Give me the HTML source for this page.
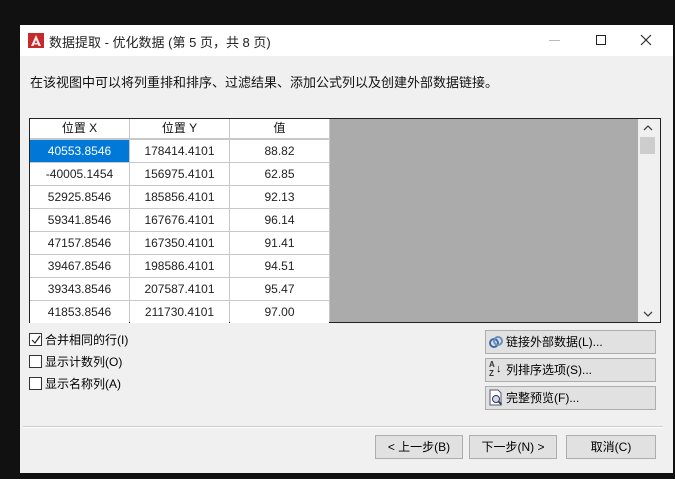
<!DOCTYPE html>
<html><head><meta charset="utf-8"><style>
*{margin:0;padding:0;box-sizing:border-box}
body{width:675px;height:479px;background:#111;position:relative;overflow:hidden;font-family:"Liberation Sans","Noto Sans CJK SC",sans-serif;font-size:12px;color:#000}
.win{position:absolute;left:20px;top:25px;width:653px;height:448px;background:#f0f0f0}
.title{position:absolute;left:0;top:0;width:653px;height:31px;background:#fff}
.abs{position:absolute}
.cell{position:absolute;height:22px;line-height:22px;text-align:center;background:#fff;font-size:12px;color:#222}
.btn{position:absolute;background:#e1e1e1;border:1px solid #adadad;font-size:12px;line-height:22px}
.cb{position:absolute;width:13px;height:13px;border:1px solid #333;background:#fff}
</style></head><body>
<div class="win">
<div class="title">
<svg class="abs" style="left:8px;top:8px" width="16" height="15" viewBox="0 0 16 15"><rect width="16" height="15" fill="#c62a2a"/><path d="M3 13 L8 2 L13 13 L10.5 13 L8 7 L5.5 13Z M6.5 10h3v1.5h-3z" fill="#fff" opacity=".9"/></svg>
<div class="abs" style="left:29px;top:7px;font-size:13px;color:#222">数据提取 - 优化数据 (第 5 页，共 8 页)</div>
<div class="abs" style="left:529px;top:15px;width:11px;height:1px;background:#bbb"></div>
<div class="abs" style="left:576px;top:10px;width:10px;height:10px;border:1px solid #222"></div>
<svg class="abs" style="left:620px;top:9px" width="12" height="12"><path d="M1 1L11 11M11 1L1 11" stroke="#222" stroke-width="1.1"/></svg>
</div>
<div class="abs" style="left:10px;top:47px;font-size:13px;color:#111">在该视图中可以将列重排和排序、过滤结果、添加公式列以及创建外部数据链接。</div>
<div class="abs" style="left:9px;top:93px;width:632px;height:205px;border:1px solid #222;background:#ababab"></div>
<div class="abs" style="left:10px;top:94px;width:300px;height:203px;background:#c8c8c8"></div>
<div class="abs" style="left:618px;top:94px;width:22px;height:203px;background:#f0f0f0"></div>
<div class="abs" style="left:620px;top:112px;width:15px;height:17px;background:#cdcdcd"></div>
<svg class="abs" style="left:623px;top:99px" width="10" height="7"><path d="M1 6L5 2L9 6" stroke="#444" fill="none" stroke-width="1.3"/></svg>
<svg class="abs" style="left:623px;top:286px" width="10" height="7"><path d="M1 1L5 5L9 1" stroke="#444" fill="none" stroke-width="1.3"/></svg>
<div id="t"></div>
<div class="cb" style="left:9px;top:308px"></div>
<svg class="abs" style="left:10px;top:309px" width="12" height="12"><path d="M2 6L5 9L10 2" stroke="#222" fill="none" stroke-width="1.2"/></svg>
<div class="abs" style="left:25px;top:306px">合并相同的行(I)</div>
<div class="cb" style="left:9px;top:330px"></div>
<div class="abs" style="left:25px;top:328px">显示计数列(O)</div>
<div class="cb" style="left:9px;top:352px"></div>
<div class="abs" style="left:25px;top:350px">显示名称列(A)</div>
<div class="btn" style="left:465px;top:305px;width:171px;height:24px;padding-left:20px">链接外部数据(L)...</div>
<svg class="abs" style="left:468px;top:310px" width="16" height="14"><circle cx="6" cy="8" r="4" fill="none" stroke="#3a6aa8" stroke-width="2"/><circle cx="10" cy="6" r="4" fill="none" stroke="#6a8ec0" stroke-width="2"/></svg>
<div class="btn" style="left:465px;top:333px;width:171px;height:24px;padding-left:20px">列排序选项(S)...</div>
<div class="abs" style="left:469px;top:335px;font-size:8px;line-height:9px;font-weight:bold;color:#333">A<br>Z</div><div class="abs" style="left:476px;top:338px;font-size:11px">↓</div>
<div class="btn" style="left:465px;top:361px;width:171px;height:24px;padding-left:20px">完整预览(F)...</div>
<svg class="abs" style="left:468px;top:364px" width="16" height="18"><path d="M2 1h8l3 3v12H2z" fill="#fff" stroke="#557"/><circle cx="8" cy="10" r="3.5" fill="#cde" stroke="#335"/><path d="M10.5 12.5l3 3" stroke="#335" stroke-width="1.6"/></svg>
<div class="abs" style="left:3px;top:401px;width:640px;height:2px;border-top:1px solid #ccc;border-bottom:1px solid #fff"></div>
<div class="btn" style="left:355px;top:410px;width:88px;height:24px;text-align:center">&lt; 上一步(B)</div>
<div class="btn" style="left:449px;top:410px;width:88px;height:24px;text-align:center">下一步(N) &gt;</div>
<div class="btn" style="left:546px;top:410px;width:90px;height:24px;text-align:center">取消(C)</div>
</div>
<script>
var d=[["40553.8546","178414.4101","88.82"],["-40005.1454","156975.4101","62.85"],["52925.8546","185856.4101","92.13"],["59341.8546","167676.4101","96.14"],["47157.8546","167350.4101","91.41"],["39467.8546","198586.4101","94.51"],["39343.8546","207587.4101","95.47"],["41853.8546","211730.4101","97.00"]];
var h='',xs=[10,110,210];
["位置 X","位置 Y","值"].forEach(function(t,i){h+='<div class="cell" style="left:'+xs[i]+'px;top:94px;width:99px;height:19px;line-height:19px;color:#111">'+t+'</div>'});
d.forEach(function(r,j){r.forEach(function(t,i){var s=(i==0&&j==0)?'background:#0078d7;color:#fff;':'';h+='<div class="cell" style="'+s+'left:'+xs[i]+'px;top:'+(115+j*23)+'px;width:99px">'+t+'</div>'})});
document.getElementById('t').innerHTML=h;
</script>
</body></html>
